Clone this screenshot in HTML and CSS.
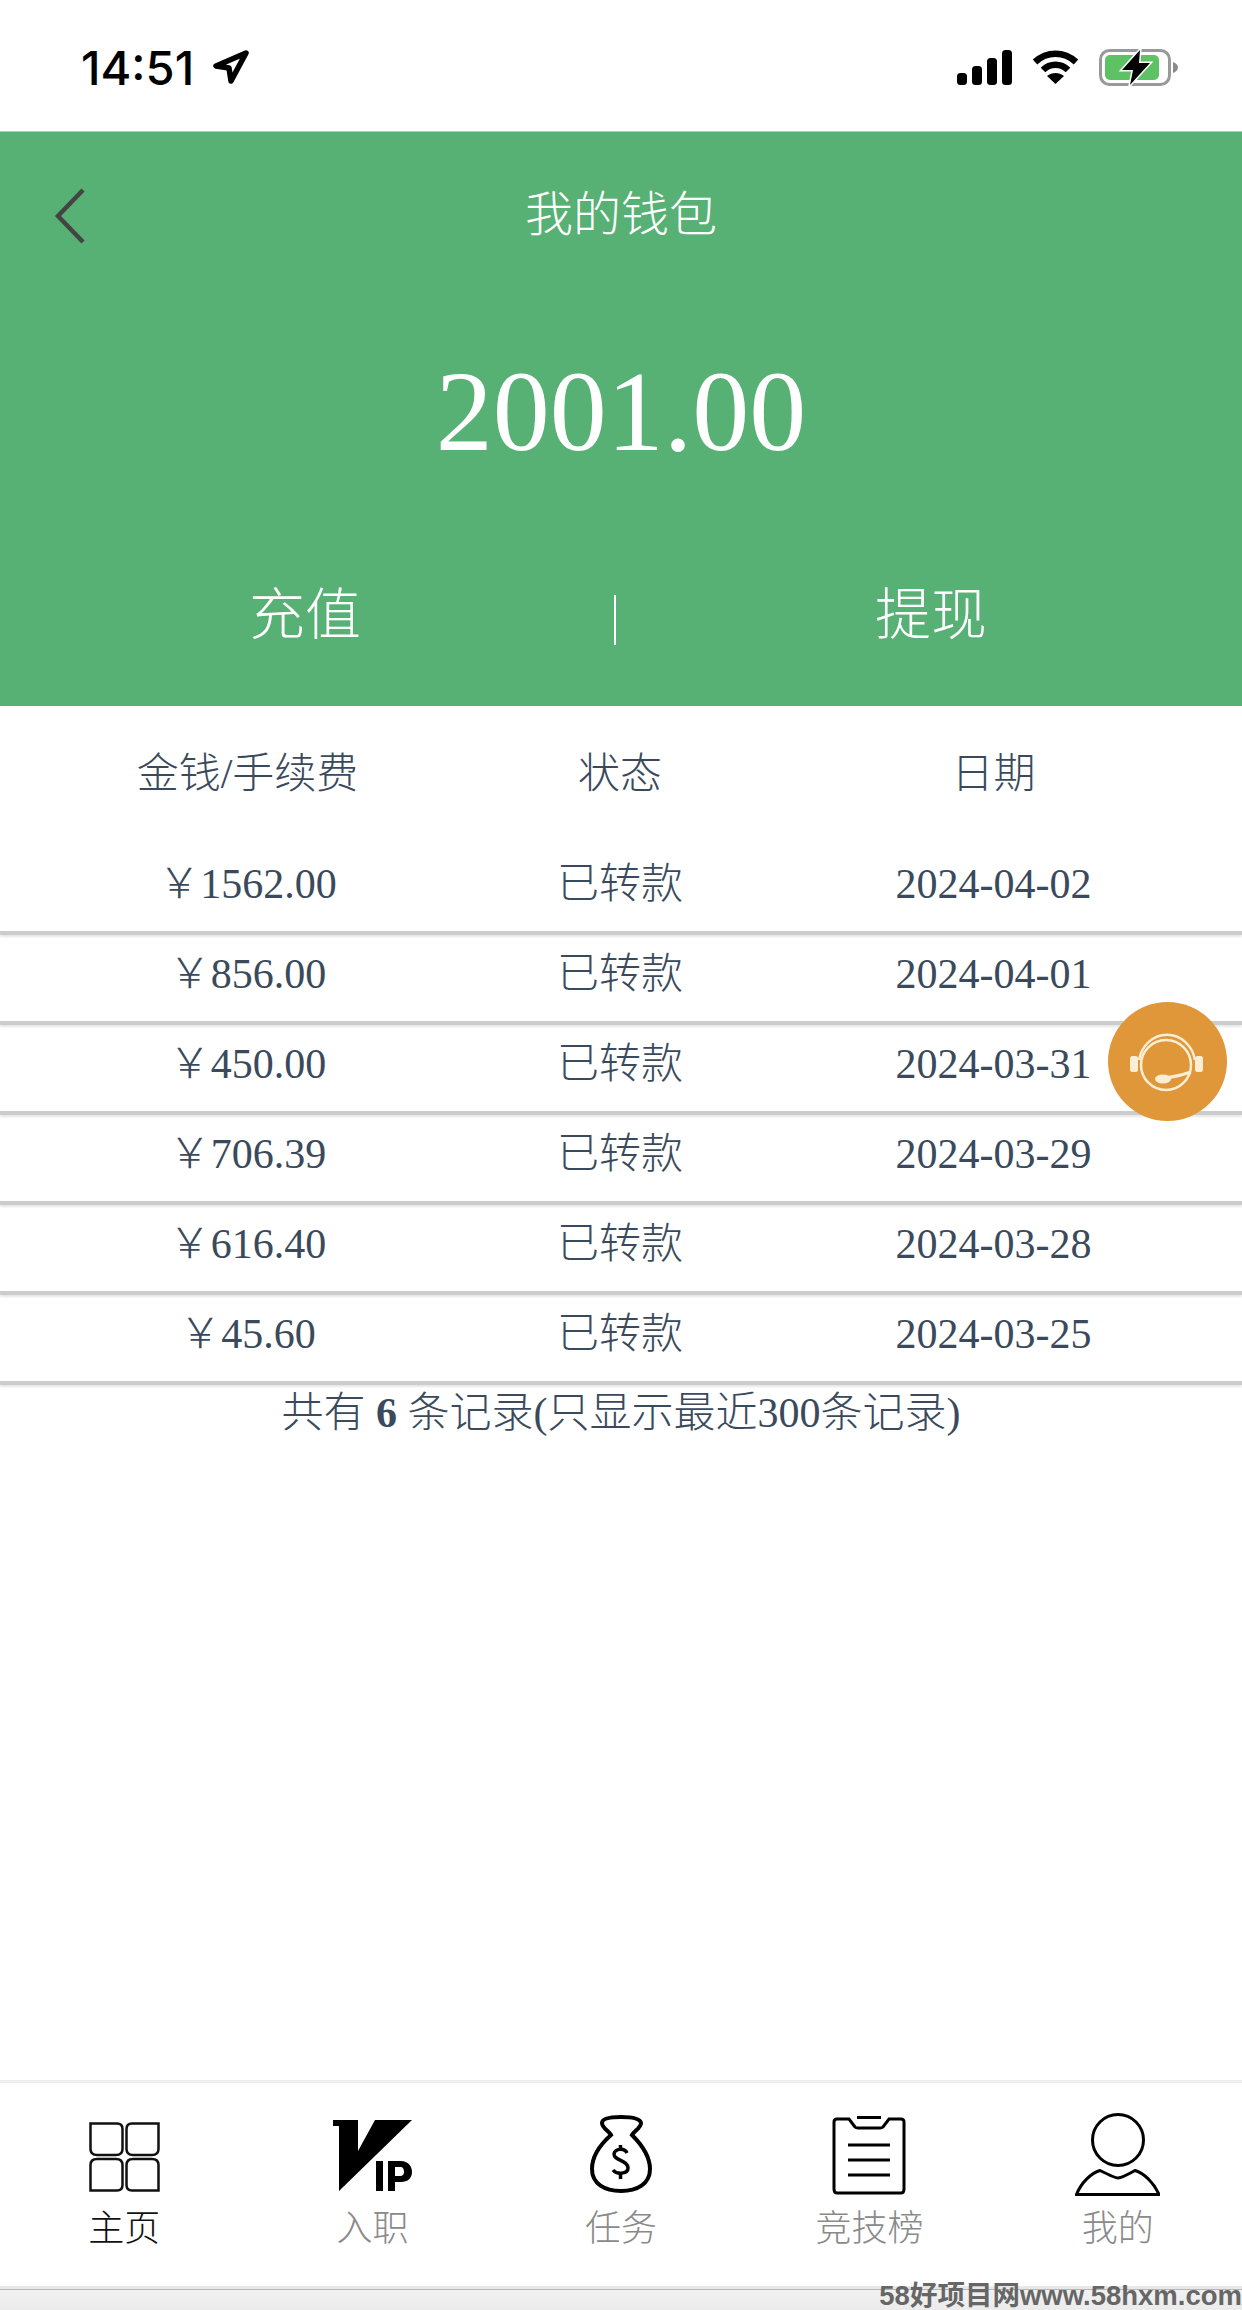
FILE: index.html
```html
<!DOCTYPE html>
<html lang="zh-CN">
<head>
    <meta charset="UTF-8">
    <meta name="viewport" content="width=device-width, initial-scale=1.0">
    <title>我的钱包</title>
    <link rel="stylesheet" href="styles.css">
</head>
<body>
<div class="page">
    <!-- Status bar -->
    <div class="status-bar">
        <div class="status-left">
            <span class="time">14:51</span>
            <svg class="loc-icon" viewBox="0 0 37 36"><path d="M34 4 L4 17 L17 19 L19 32 Z" fill="none" stroke="#000" stroke-width="5.5" stroke-linejoin="round"/></svg>
        </div>
        <div class="status-right">
            <svg class="signal-icon" viewBox="0 0 55 35">
                <rect x="0" y="23" width="10" height="12" rx="3.5"/>
                <rect x="15" y="16" width="10" height="19" rx="3.5"/>
                <rect x="30" y="8" width="10" height="27" rx="3.5"/>
                <rect x="45" y="0" width="10" height="35" rx="3.5"/>
            </svg>
            <svg class="wifi-icon" viewBox="0 0 47 36">
                <path d="M3 13 C15 2 32 2 44 13" fill="none" stroke="#000" stroke-width="6.5"/>
                <path d="M11 21 C18 14 29 14 36 21" fill="none" stroke="#000" stroke-width="6.5"/>
                <path d="M23.5 35 L15 27 C20 23 27 23 32 27 Z"/>
            </svg>
            <svg class="battery-icon" viewBox="0 0 79 37">
                <rect x="1.5" y="1.5" width="69" height="34" rx="9" fill="none" stroke="#999" stroke-width="3"/>
                <rect x="6" y="6" width="54" height="25" rx="5" fill="#5cc264"/>
                <path d="M74 13 C77 14 79 16 79 18.500 C79 21 77 23 74 24 Z" fill="#8a8a8a"/>
                <path d="M41 1 L23 21 L34 21 L31 36 L51 14 L40 14 Z" stroke="#fff" stroke-width="3" paint-order="stroke"/>
            </svg>
        </div>
    </div>

    <!-- Wallet header -->
    <div class="wallet-head">
        <div class="title-row">
            <svg class="back-icon" viewBox="0 0 32 56"><path d="M29 2 L4 28 L29 54" fill="none" stroke="#444" stroke-width="4.5"/></svg>
            <h1 class="title">我的钱包</h1>
        </div>
        <div class="amount">2001.00</div>
        <div class="actions">
            <a href="#" class="action">充值</a>
            <span class="action-line"></span>
            <a href="#" class="action">提现</a>
        </div>
    </div>

    <!-- Records -->
    <div class="records">
        <div class="record-head">
            <span>金钱/手续费</span>
            <span>状态</span>
            <span>日期</span>
        </div>
        <div class="record"><span>￥1562.00</span><span>已转款</span><span>2024-04-02</span></div>
        <div class="record"><span>￥856.00</span><span>已转款</span><span>2024-04-01</span></div>
        <div class="record"><span>￥450.00</span><span>已转款</span><span>2024-03-31</span></div>
        <div class="record"><span>￥706.39</span><span>已转款</span><span>2024-03-29</span></div>
        <div class="record"><span>￥616.40</span><span>已转款</span><span>2024-03-28</span></div>
        <div class="record"><span>￥45.60</span><span>已转款</span><span>2024-03-25</span></div>
        <div class="record-total">共有 <b>6</b> 条记录(只显示最近300条记录)</div>

        <!-- Floating service button -->
        <a href="#" class="service-btn">
            <svg viewBox="0 0 119 119" fill="none" stroke="#fbeed5">
                <circle cx="58" cy="63" r="25" stroke-width="2.500"/>
                <path d="M31 58 A28.500 31 0 0 1 87 58" stroke-width="2.500"/>
                <rect x="22" y="54" width="8" height="16" rx="2.500" fill="#fbeed5" stroke="none"/>
                <rect x="87" y="54" width="8" height="16" rx="2.500" fill="#fbeed5" stroke="none"/>
                <path d="M56 76 C66 75 74 73 83 70" stroke-width="3"/>
                <ellipse cx="55" cy="77" rx="8" ry="4.500" fill="#fbeed5" stroke="none"/>
            </svg>
        </a>
    </div>

    <!-- Bottom tabs -->
    <nav class="tabs">
        <a href="#" class="tab active">
            <svg class="tab-icon icon-home" width="71" height="70" viewBox="0 0 71 70" fill="none" stroke="#111" stroke-width="2.500">
                <path d="M1.500 1.500 H28 Q33.500 1.500 33.500 7 V27 Q33.500 33 27 33 H8 Q1.500 33 1.500 27 Z"/>
                <path d="M69.500 1.500 H43 Q37.500 1.500 37.500 7 V27 Q37.500 33 44 33 H63 Q69.500 33 69.500 27 Z"/>
                <path d="M1.500 68.500 H28 Q33.500 68.500 33.500 63 V43 Q33.500 37 27 37 H8 Q1.500 37 1.500 43 Z"/>
                <path d="M69.500 68.500 H43 Q37.500 68.500 37.500 63 V43 Q37.500 37 44 37 H63 Q69.500 37 69.500 43 Z"/>
            </svg>
            <span>主页</span>
        </a>
        <a href="#" class="tab">
            <svg class="tab-icon icon-vip" width="79" height="71" viewBox="0 0 79 71">
                <path d="M0 0 H25 V31 L42 0 H79 L6 71 V6 H0 Z"/>
                <rect x="43" y="41" width="7" height="30"/>
                <path fill-rule="evenodd" d="M55 41 H68 C75 41 79 46 79 52 C79 58 75 62 68 62 H62 V71 H55 Z M62 47 V56 H67 C70 56 71 54 71 52 C71 49 70 47 67 47 Z"/>
            </svg>
            <span>入职</span>
        </a>
        <a href="#" class="tab">
            <svg class="tab-icon icon-bag" width="62" height="78" viewBox="0 0 62 78" fill="none" stroke="#000" stroke-width="4">
                <path d="M31 2 C40 2 50 3 51 8 C51 13 44 16 42 20 C50 28 60 40 60 54 C60 69 47 76 31 76 C15 76 2 69 2 54 C2 40 12 28 21 20 C19 16 12 13 12 8 C12 3 22 2 31 2 Z"/>
                <path d="M37 38 C35 33 25 33 24 39 C24 46 38 45 38 53 C38 59 27 60 23 55" stroke-width="3.500"/>
                <path d="M30.500 30 V35 M30.500 58 V64" stroke-width="3.500"/>
            </svg>
            <span>任务</span>
        </a>
        <a href="#" class="tab">
            <svg class="tab-icon icon-board" width="74" height="79" viewBox="0 0 74 79" fill="none" stroke="#000" stroke-width="3">
                <path d="M5 3 H17 L23 11 Q24 12 26 12 H48 Q50 12 51 11 L57 3 H69 Q72 3 72 6 V73 Q72 77 69 77 H5 Q2 77 2 73 V6 Q2 3 5 3 Z"/>
                <path d="M25 1.500 H49"/>
                <path d="M16 29 H58 M16 44 H58 M16 59 H58"/>
            </svg>
            <span>竞技榜</span>
        </a>
        <a href="#" class="tab">
            <svg class="tab-icon" width="85" height="83" viewBox="0 0 85 83" fill="none" stroke="#000" stroke-width="3">
                <circle cx="43" cy="27" r="25.500"/>
                <path d="M1.500 81.500 C6 70 16 60 25 57.500 C34 62 41 65 43 65 C46 65 52 62 60 57.500 C69 60 79 70 84 81.500 Z"/>
            </svg>
            <span>我的</span>
        </a>
    </nav>

    <!-- Browser strip -->
    <div class="bottom-strip">58好项目网www.58hxm.com</div>
</div>
</body>
</html>
```

FILE: styles.css
```css
* {
    box-sizing: border-box;
}
body {
    margin: 0;
    font-family: "Liberation Serif", "Noto Sans CJK SC", serif;
    font-weight: 300;
    color: #3a4a5c;
    background: #fff;
}
a {
    text-decoration: none;
    color: inherit;
}
.page {
    display: flex;
    flex-direction: column;
    height: 2310px;
    overflow: hidden;
}

/* Status bar */
.status-bar {
    height: 131px;
    display: flex;
    justify-content: space-between;
    align-items: center;
    padding: 3px 64px 0 81px;
    flex-shrink: 0;
}
.status-left,
.status-right {
    display: flex;
    align-items: center;
}
.time {
    font-family: Inter, "Liberation Sans", sans-serif;
    font-size: 47px;
    font-weight: 500;
    color: #000;
}
.loc-icon {
    width: 37px;
    height: 36px;
    margin-left: 18px;
}
.signal-icon {
    width: 55px;
    height: 35px;
}
.wifi-icon {
    width: 47px;
    height: 36px;
    margin-left: 20px;
}
.battery-icon {
    width: 79px;
    height: 37px;
    margin-left: 20px;
}

/* Green header */
.wallet-head {
    height: 575px;
    flex-shrink: 0;
    background: #57b074;
    border-top: 1px solid #b9c9be;
    color: #fff;
    display: flex;
    flex-direction: column;
    align-items: center;
}
.title-row {
    width: 100%;
    height: 163px;
    padding-top: 2px;
    display: flex;
    justify-content: center;
    align-items: center;
    position: relative;
}
.back-icon {
    position: absolute;
    left: 54px;
    top: 56px;
    width: 32px;
    height: 56px;
}
.title {
    margin: 0;
    font-size: 48px;
    font-weight: 300;
    line-height: 1;
}
.amount {
    font-size: 114px;
    line-height: 1;
    margin-top: 60px;
}
.actions {
    width: 100%;
    display: grid;
    grid-template-columns: 610px 2px 1fr;
    column-gap: 4px;
    align-items: center;
    margin-top: 116px;
}
.action {
    font-size: 56px;
    line-height: 1;
    text-align: center;
}
.action-line {
    height: 50px;
    width: 2px;
    margin-top: 10px;
    background: #fff;
}

/* Records */
.records {
    flex: 1;
    position: relative;
}
.record-head,
.record {
    display: grid;
    grid-template-columns: 495px 250px 1fr;
    align-items: center;
    text-align: center;
    font-size: 42px;
    line-height: 1;
}
.record-head {
    height: 139px;
    padding-bottom: 4px;
}
.record {
    height: 90px;
    padding-bottom: 8px;
    border-bottom: 4px solid #ccc;
    box-shadow: 0 2px 2px #e6e6e6;
}
.record-total {
    text-align: center;
    font-size: 42px;
    line-height: 1.1;
    margin-top: 5px;
}
.record-total b {
    font-weight: 700;
}
.service-btn {
    position: absolute;
    left: 1108px;
    top: 296px;
    width: 119px;
    height: 119px;
    border-radius: 50%;
    background: #e0973a;
}
.service-btn svg {
    display: block;
}

/* Bottom tabs */
.tabs {
    height: 206px;
    flex-shrink: 0;
    display: grid;
    grid-template-columns: repeat(5, 1fr);
    border-top: 3px solid #eee;
}
.tab {
    display: flex;
    flex-direction: column;
    align-items: center;
    justify-content: flex-end;
    padding-bottom: 43px;
    font-family: "Noto Sans CJK SC", sans-serif;
    font-size: 36px;
    line-height: 1;
    color: #8a8a8a;
}
.tab.active {
    color: #111;
}
.tab-icon {
    margin-bottom: 11px;
}
.icon-home {
    margin-bottom: 15px;
}
.icon-vip {
    margin-bottom: 16px;
}
.icon-bag {
    margin-bottom: 14px;
}
.icon-board {
    margin-bottom: 12px;
}

/* Browser strip */
.bottom-strip {
    height: 24px;
    flex-shrink: 0;
    background: linear-gradient(#e8e8e8 0 3px, #b5b5b5 3px 4px, #f1f1f1 4px, #ebebeb);
    text-align: right;
    font-family: "Liberation Sans", "Noto Sans CJK SC", sans-serif;
    font-size: 27.5px;
    font-weight: 700;
    line-height: 20px;
    color: #666;
    white-space: nowrap;
}
```
